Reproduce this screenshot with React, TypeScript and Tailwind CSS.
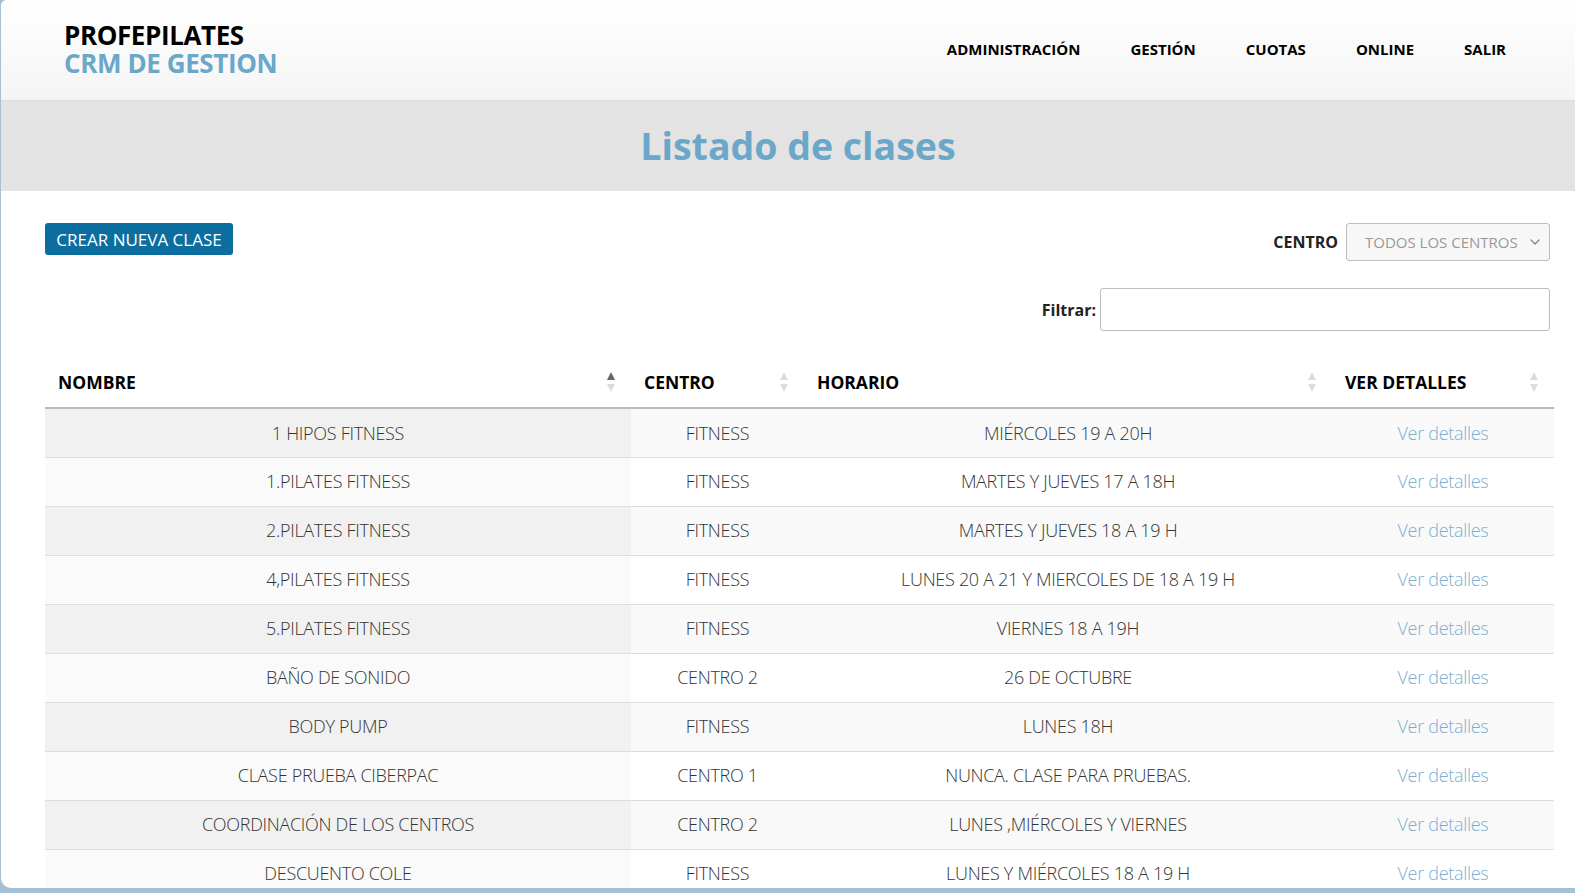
import { ChevronDown } from "lucide-react"

interface Clase {
  nombre: string
  centro: string
  horario: string
}

const clases: Clase[] = [
  { nombre: "1 HIPOS FITNESS", centro: "FITNESS", horario: "MIÉRCOLES 19 A 20H" },
  { nombre: "1.PILATES FITNESS", centro: "FITNESS", horario: "MARTES Y JUEVES 17 A 18H" },
  { nombre: "2.PILATES FITNESS", centro: "FITNESS", horario: "MARTES Y JUEVES 18 A 19 H" },
  { nombre: "4,PILATES FITNESS", centro: "FITNESS", horario: "LUNES 20 A 21 Y MIERCOLES DE 18 A 19 H" },
  { nombre: "5.PILATES FITNESS", centro: "FITNESS", horario: "VIERNES 18 A 19H" },
  { nombre: "BAÑO DE SONIDO", centro: "CENTRO 2", horario: "26 DE OCTUBRE" },
  { nombre: "BODY PUMP", centro: "FITNESS", horario: "LUNES 18H" },
  { nombre: "CLASE PRUEBA CIBERPAC", centro: "CENTRO 1", horario: "NUNCA. CLASE PARA PRUEBAS." },
  { nombre: "COORDINACIÓN DE LOS CENTROS", centro: "CENTRO 2", horario: "LUNES ,MIÉRCOLES Y VIERNES" },
  { nombre: "DESCUENTO COLE", centro: "FITNESS", horario: "LUNES Y MIÉRCOLES 18 A 19 H" },
]

function SortIcon({ active }: { active?: boolean }) {
  return (
    <svg width="8" height="20" viewBox="0 0 8 20" className="shrink-0">
      <path d="M4 0 L8 8 L0 8 Z" fill={active ? "#666" : "#dcdcdc"} />
      <path d="M0 12 L8 12 L4 20 Z" fill="#dcdcdc" />
    </svg>
  )
}

function HeadCell({ label, active, className }: { label: string; active?: boolean; className: string }) {
  return (
    <th className={`${className} pl-[13px] pr-[16px] pt-[14px] pb-[12px] text-left align-middle`}>
      <div className="flex items-center justify-between">
        <span className="text-[17.5px] font-bold text-black">{label}</span>
        <SortIcon active={active} />
      </div>
    </th>
  )
}

export default function App() {
  return (
    <div className="w-full h-[893px] bg-[#a3c2d7] pl-[1px] pb-[5px] font-['Open_Sans',sans-serif]">
      <div className="h-full bg-white rounded-bl-[10px] rounded-tl-[6px] overflow-hidden">
        {/* cabecera */}
        <header className="h-[101px] bg-gradient-to-b from-white to-[#f5f5f5] border-b border-[#dcdcdc] flex items-center justify-between pl-[63px] pr-[69px]">
          <div className="leading-[28px] font-bold text-[26px] tracking-[-0.4px] pb-[3px]">
            <div className="text-black">PROFEPILATES</div>
            <div className="text-[#6aa7c9]">CRM DE GESTION</div>
          </div>
          <nav className="flex items-center gap-[50px] text-[15px] font-bold text-black pb-[2px]">
            <span>ADMINISTRACIÓN</span>
            <span>GESTIÓN</span>
            <span>CUOTAS</span>
            <span>ONLINE</span>
            <span>SALIR</span>
          </nav>
        </header>

        <div className="h-[90px] bg-[#e3e3e3] flex items-center justify-center pl-[20px]">
          <h1 className="text-[37.5px] font-bold text-[#6aa7c9]">Listado de clases</h1>
        </div>

        <div className="pl-[44px] pr-[21px] pt-[32px]">
          <div className="flex items-start justify-between">
            <button className="h-[32px] w-[188px] bg-[#0b6e9f] text-white text-[17px] rounded-[3px] leading-none">
              CREAR NUEVA CLASE
            </button>
            <div className="flex items-center gap-[8px] mr-[4px]">
              <span className="text-[16px] font-bold text-[#222]">CENTRO</span>
              <div className="w-[204px] h-[38px] border border-[#bdbdbd] rounded-[3px] bg-[#f7f7f7] flex items-center justify-between pl-[18px] pr-[6px]">
                <span className="text-[15px] text-[#999]">TODOS LOS CENTROS</span>
                <ChevronDown className="w-4 h-4 text-[#888]" strokeWidth={2} />
              </div>
            </div>
          </div>

          <div className="flex items-center justify-end gap-[4px] mt-[27px] mr-[4px]">
            <span className="text-[16px] font-bold text-[#222]">Filtrar:</span>
            <div className="w-[450px] h-[43px] border border-[#bdbdbd] rounded-[3px] bg-white" />
          </div>

          <table className="w-[1509px] mt-[24px] border-collapse">
            <thead>
              <tr className="border-b-2 border-[#bbbbbb]">
                <HeadCell label="NOMBRE" active className="w-[586px]" />
                <HeadCell label="CENTRO" className="w-[173px]" />
                <HeadCell label="HORARIO" className="w-[528px]" />
                <HeadCell label="VER DETALLES" className="w-[222px]" />
              </tr>
            </thead>
            <tbody className="text-[18px] font-light text-[#333]">
              {clases.map((c, i) => (
                <tr key={c.nombre} className={`border-b border-[#dddddd] ${i % 2 === 0 ? "bg-[#f9f9f9]" : "bg-white"}`}>
                  <td className={`h-[49px] text-center tracking-[-0.3px] ${i % 2 === 0 ? "bg-[#f1f1f1]" : "bg-[#fafafa]"}`}>{c.nombre}</td>
                  <td className="text-center tracking-[-0.3px]">{c.centro}</td>
                  <td className="text-center tracking-[-0.3px]">{c.horario}</td>
                  <td className="text-center text-[#7ab0d2] tracking-[-0.3px]">Ver detalles</td>
                </tr>
              ))}
            </tbody>
          </table>
        </div>
      </div>
    </div>
  )
}
